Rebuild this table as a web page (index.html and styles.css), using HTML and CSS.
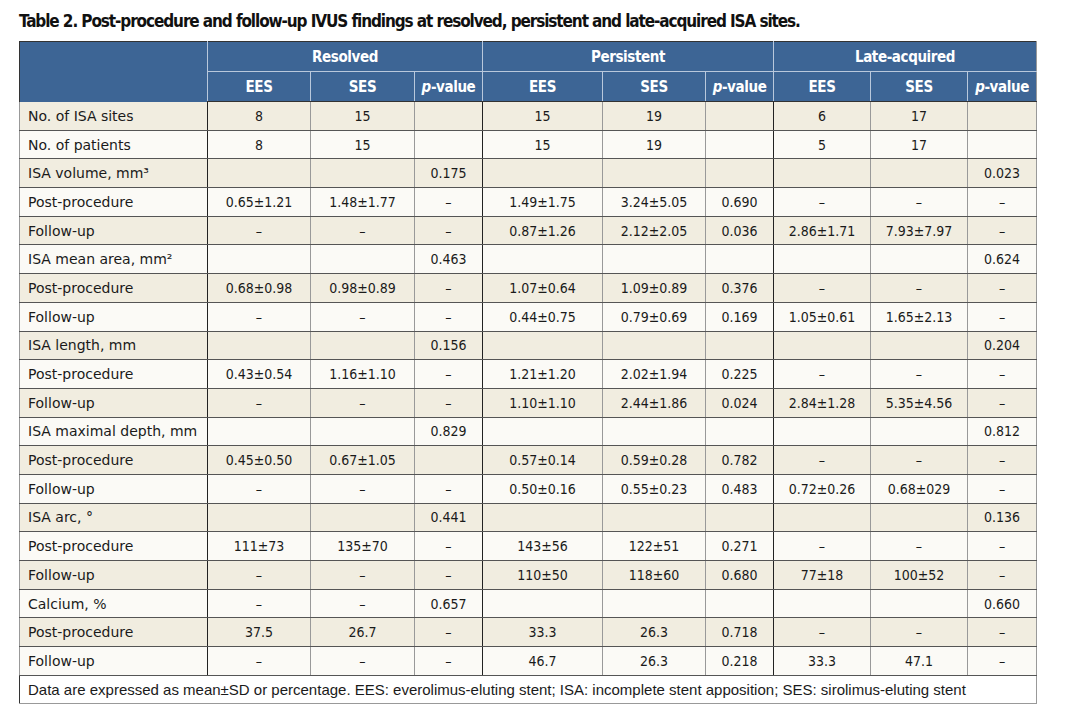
FILE: index.html
```html
<!DOCTYPE html>
<html>
<head>
<meta charset="utf-8">
<link rel="stylesheet" href="styles.css">
</head>
<body>
<div class="page">
<h1 class="title">Table 2. Post-procedure and follow-up IVUS findings at resolved, persistent and late-acquired ISA sites.</h1>
<table class="tbl">
<colgroup>
<col class="c-label"><col class="c1"><col class="c2"><col class="c3"><col class="c4"><col class="c5"><col class="c6"><col class="c7"><col class="c8"><col class="c9">
</colgroup>
<thead>
<tr class="h1">
<th rowspan="2" class="hl"></th>
<th colspan="3" class="g">Resolved</th>
<th colspan="3" class="g">Persistent</th>
<th colspan="3" class="g gl">Late-acquired</th>
</tr>
<tr class="h2">
<th class="ga">EES</th><th>SES</th><th><i>p</i>-value</th>
<th class="ga">EES</th><th>SES</th><th><i>p</i>-value</th>
<th class="ga">EES</th><th>SES</th><th><i>p</i>-value</th>
</tr>
</thead>
<tbody>
<tr class="o"><td>No. of ISA sites</td><td>8</td><td>15</td><td></td><td>15</td><td>19</td><td></td><td>6</td><td>17</td><td></td></tr>
<tr class="e"><td>No. of patients</td><td>8</td><td>15</td><td></td><td>15</td><td>19</td><td></td><td>5</td><td>17</td><td></td></tr>
<tr class="o"><td>ISA volume, mm³</td><td></td><td></td><td>0.175</td><td></td><td></td><td></td><td></td><td></td><td>0.023</td></tr>
<tr class="e"><td>Post-procedure</td><td>0.65±1.21</td><td>1.48±1.77</td><td>–</td><td>1.49±1.75</td><td>3.24±5.05</td><td>0.690</td><td>–</td><td>–</td><td>–</td></tr>
<tr class="o"><td>Follow-up</td><td>–</td><td>–</td><td>–</td><td>0.87±1.26</td><td>2.12±2.05</td><td>0.036</td><td>2.86±1.71</td><td>7.93±7.97</td><td>–</td></tr>
<tr class="e"><td>ISA mean area, mm²</td><td></td><td></td><td>0.463</td><td></td><td></td><td></td><td></td><td></td><td>0.624</td></tr>
<tr class="o"><td>Post-procedure</td><td>0.68±0.98</td><td>0.98±0.89</td><td>–</td><td>1.07±0.64</td><td>1.09±0.89</td><td>0.376</td><td>–</td><td>–</td><td>–</td></tr>
<tr class="e"><td>Follow-up</td><td>–</td><td>–</td><td>–</td><td>0.44±0.75</td><td>0.79±0.69</td><td>0.169</td><td>1.05±0.61</td><td>1.65±2.13</td><td>–</td></tr>
<tr class="o"><td>ISA length, mm</td><td></td><td></td><td>0.156</td><td></td><td></td><td></td><td></td><td></td><td>0.204</td></tr>
<tr class="e"><td>Post-procedure</td><td>0.43±0.54</td><td>1.16±1.10</td><td>–</td><td>1.21±1.20</td><td>2.02±1.94</td><td>0.225</td><td>–</td><td>–</td><td>–</td></tr>
<tr class="o"><td>Follow-up</td><td>–</td><td>–</td><td>–</td><td>1.10±1.10</td><td>2.44±1.86</td><td>0.024</td><td>2.84±1.28</td><td>5.35±4.56</td><td>–</td></tr>
<tr class="e"><td>ISA maximal depth, mm</td><td></td><td></td><td>0.829</td><td></td><td></td><td></td><td></td><td></td><td>0.812</td></tr>
<tr class="o"><td>Post-procedure</td><td>0.45±0.50</td><td>0.67±1.05</td><td></td><td>0.57±0.14</td><td>0.59±0.28</td><td>0.782</td><td>–</td><td>–</td><td>–</td></tr>
<tr class="e"><td>Follow-up</td><td>–</td><td>–</td><td>–</td><td>0.50±0.16</td><td>0.55±0.23</td><td>0.483</td><td>0.72±0.26</td><td>0.68±029</td><td>–</td></tr>
<tr class="o"><td>ISA arc, °</td><td></td><td></td><td>0.441</td><td></td><td></td><td></td><td></td><td></td><td>0.136</td></tr>
<tr class="e"><td>Post-procedure</td><td>111±73</td><td>135±70</td><td>–</td><td>143±56</td><td>122±51</td><td>0.271</td><td>–</td><td>–</td><td>–</td></tr>
<tr class="o"><td>Follow-up</td><td>–</td><td>–</td><td>–</td><td>110±50</td><td>118±60</td><td>0.680</td><td>77±18</td><td>100±52</td><td>–</td></tr>
<tr class="e"><td>Calcium, %</td><td>–</td><td>–</td><td>0.657</td><td></td><td></td><td></td><td></td><td></td><td>0.660</td></tr>
<tr class="o"><td>Post-procedure</td><td>37.5</td><td>26.7</td><td>–</td><td>33.3</td><td>26.3</td><td>0.718</td><td>–</td><td>–</td><td>–</td></tr>
<tr class="e"><td>Follow-up</td><td>–</td><td>–</td><td>–</td><td>46.7</td><td>26.3</td><td>0.218</td><td>33.3</td><td>47.1</td><td>–</td></tr>
</tbody>
<tfoot>
<tr><td colspan="10" class="note">Data are expressed as mean±SD or percentage. EES: everolimus-eluting stent; ISA: incomplete stent apposition; SES: sirolimus-eluting stent</td></tr>
</tfoot>
</table>
</div>
</body>
</html>
```
FILE: styles.css
```css
html, body {
  margin: 0;
  padding: 0;
  background: #ffffff;
}
.page {
  padding: 12px 0 0 19px;
}
.title {
  margin: 0 0 10px 0;
  font-family: "DejaVu Sans Condensed", sans-serif;
  font-weight: bold;
  font-size: 17px;
  letter-spacing: -1.1px;
  line-height: 19px;
  color: #111;
  white-space: nowrap;
}
.tbl {
  border-collapse: collapse;
  table-layout: fixed;
  width: 1017px;
  font-family: "DejaVu Sans Condensed", sans-serif;
  font-size: 14px;
  color: #1a1a1a;
  border-top: 1px solid #333;
  border-left: 1px solid #333;
  border-right: 1px solid #999;
}
.c-label { width: 188px; }
.c1 { width: 103px; }
.c2 { width: 104px; }
.c3 { width: 68px; }
.c4 { width: 120px; }
.c5 { width: 103px; }
.c6 { width: 68px; }
.c7 { width: 97px; }
.c8 { width: 97px; }
.c9 { width: 69px; }
thead th {
  background: #3d6595;
  color: #ffffff;
  font-family: "DejaVu Sans Condensed", sans-serif;
  font-weight: bold;
  font-size: 15px;
  letter-spacing: -0.4px;
  height: 29px;
  padding: 0;
  text-align: center;
  border-left: 1px solid #b9c8dc;
}
thead th.hl { border-left: none; }
.h1 th.g { border-bottom: 1px solid #b9c8dc; }
.h2 th { border-bottom: 1px solid #333; }
thead th i { font-style: italic; }
tbody td {
  height: 27.7px;
  padding: 0;
  text-align: center;
  border-bottom: 1px solid #555;
  border-left: 1px solid #999;
}
tbody td:first-child {
  text-align: left;
  padding-left: 8px;
  font-family: "DejaVu Sans", sans-serif;
  font-size: 14px;
}
tbody td:nth-child(2), tbody td:nth-child(5), tbody td:nth-child(8) {
  border-left: 1px solid #222;
}
tr.o td { background: #f1ede0; }
tr.e td { background: #fbfaf6; }
.note {
  height: 27px;
  padding: 0 0 0 8px;
  font-family: "Liberation Sans", sans-serif;
  font-size: 15px;
  color: #1a1a1a;
  background: #ffffff;
  border-bottom: 1px solid #999;
}
```
